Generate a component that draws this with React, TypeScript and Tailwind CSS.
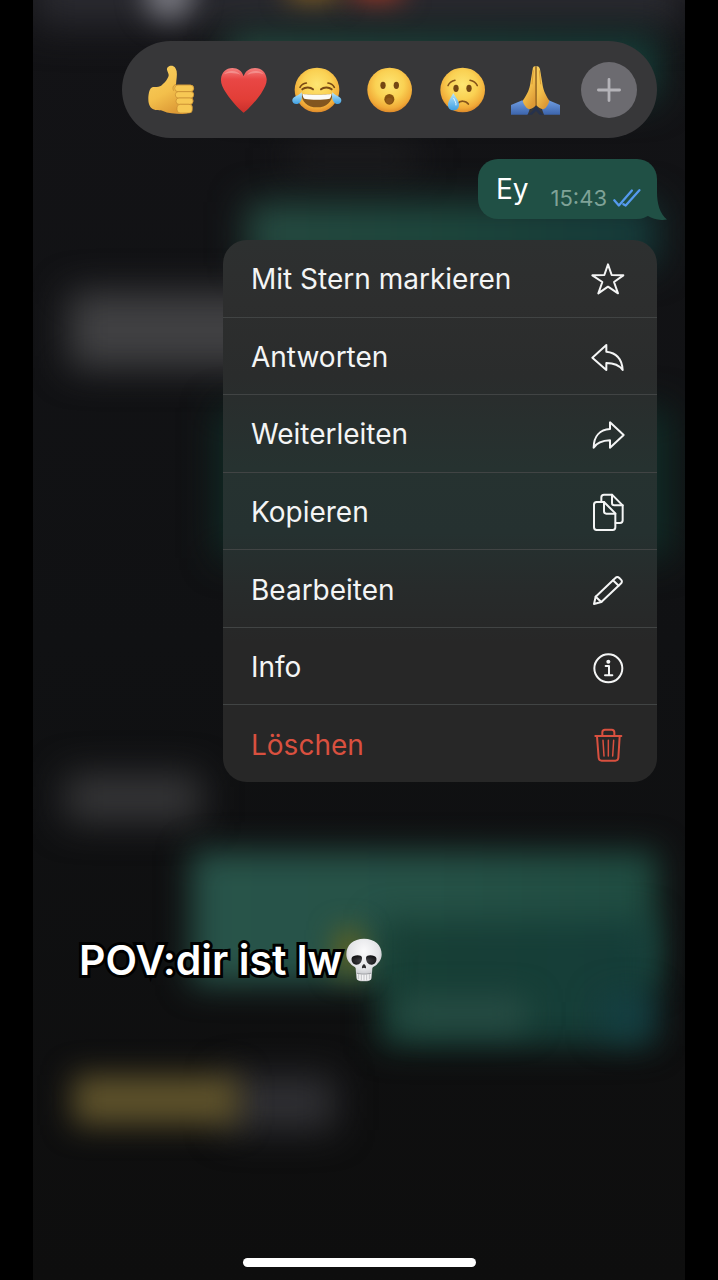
import type { ReactNode } from 'react';

/* ---------- Reaction drawings ---------- */

function Gradients() {
  return (
    <svg aria-hidden="true" className="absolute h-0 w-0">
      <defs>
        <radialGradient id="face" cx="0.5" cy="0.38" r="0.64">
          <stop offset="0" stopColor="#fde573" />
          <stop offset="0.5" stopColor="#fad153" />
          <stop offset="0.82" stopColor="#f1ab38" />
          <stop offset="1" stopColor="#d98227" />
        </radialGradient>
        <linearGradient id="hand" x1="0" y1="0" x2="0.5" y2="1">
          <stop offset="0" stopColor="#f9d160" />
          <stop offset="0.6" stopColor="#f3bf4b" />
          <stop offset="1" stopColor="#dd9a36" />
        </linearGradient>
        <linearGradient id="heart" x1="0" y1="0" x2="0" y2="1">
          <stop offset="0" stopColor="#f4807e" />
          <stop offset="0.25" stopColor="#e94745" />
          <stop offset="0.7" stopColor="#e23e37" />
          <stop offset="1" stopColor="#c92f2b" />
        </linearGradient>
        <linearGradient id="tear" x1="0" y1="0" x2="0" y2="1">
          <stop offset="0" stopColor="#b9e7fb" />
          <stop offset="1" stopColor="#3e9fe2" />
        </linearGradient>
        <linearGradient id="sleeve" x1="0" y1="0" x2="0" y2="1">
          <stop offset="0" stopColor="#6f9de2" />
          <stop offset="1" stopColor="#3c64ac" />
        </linearGradient>
        <radialGradient id="bone" cx="0.5" cy="0.3" r="0.7">
          <stop offset="0" stopColor="#fbfbfc" />
          <stop offset="0.6" stopColor="#e2e3e6" />
          <stop offset="1" stopColor="#a9abb0" />
        </radialGradient>
        <radialGradient id="socket" cx="0.5" cy="0.6" r="0.6">
          <stop offset="0" stopColor="#4b4b4f" />
          <stop offset="1" stopColor="#111113" />
        </radialGradient>
      </defs>
    </svg>
  );
}

function ThumbsUp() {
  return (
    <svg viewBox="69 79 168 168" className="h-full w-full">
      <path
        d="M154 90c9 0 14 7 16 17 2 13-1 24-2 40h42c8 0 11 5 11 10s-2 9-5 10c4 2 5 5 5 9s-2 8-6 10c4 2 5 5 5 9 0 5-3 8-7 10 3 2 4 5 4 9 0 12-9 21-30 21-24 0-44-2-58-9-10-4-20 0-31-6-8-5-13-14-13-30s4-35 14-36c8-1 15 1 21-2 9-5 23-20 26-32 1-6-4-12-5-18-1-7 5-12 13-12z"
        fill="url(#hand)"
      />
      <g fill="#f7c854" stroke="#c48a30" strokeWidth="2">
        <rect x="164" y="148" width="57" height="20" rx="10" />
        <rect x="166" y="168" width="55" height="19" rx="9" />
        <rect x="168" y="187" width="51" height="19" rx="9" />
        <rect x="171" y="206" width="46" height="26" rx="10" />
      </g>
      <path d="M168 146c-9 3-11 11-7 19" fill="none" stroke="#c48a30" strokeWidth="2.5" />
    </svg>
  );
}

function Heart() {
  return (
    <svg viewBox="288 79 168 168" className="h-full w-full">
      <path
        d="M371 231c-5-2-34-30-52-58-12-18-17-31-16-43 2-20 15-33 34-33 17 0 29 9 34 25 5-16 18-25 34-25 20 0 33 13 35 33 1 12-5 26-17 44-18 27-47 55-52 57z"
        fill="url(#heart)"
      />
      <path d="M312 116c6-11 38-17 50 2-14-7-36-8-50-2zM381 118c12-19 44-13 50-2-14-6-36-5-50 2z" fill="#fbc4c1" opacity="0.4" />
    </svg>
  );
}

function Joy() {
  return (
    <svg viewBox="507 79 168 168" className="h-full w-full">
      <circle cx="591" cy="163" r="67" fill="url(#face)" />
      <g fill="none" stroke="#7a4a16" strokeLinecap="round">
        <path d="M540 155c4-8 11-12 19-13M624 142c8 1 15 5 19 13" strokeWidth="5" />
        <path d="M547 161c8-7 24-7 32 0M603 161c8-7 24-7 32 0" strokeWidth="6" />
      </g>
      <path d="M545 174c10 4 82 4 92 0 1 24-18 41-46 41s-47-17-46-41z" fill="#82561f" />
      <path d="M547 174c12 4 76 4 88 0-1 7-3 12-6 15-22 4-54 4-76 0-3-3-5-8-6-15z" fill="#fbfbf6" />
      <path
        d="M545 170c2 13 1 24-6 31-5 5-14 6-19 1s-4-12 2-17c6-4 16-7 23-15zM637 170c-2 13-1 24 6 31 5 5 13 6 18 1s4-12-2-17c-6-4-15-7-22-15z"
        fill="url(#tear)"
      />
    </svg>
  );
}

function Surprised() {
  return (
    <svg viewBox="726 79 168 168" className="h-full w-full">
      <circle cx="809" cy="163" r="67" fill="url(#face)" />
      <ellipse cx="789" cy="149" rx="8" ry="11" fill="#744713" />
      <ellipse cx="829" cy="149" rx="8" ry="11" fill="#744713" />
      <ellipse cx="808" cy="191" rx="15" ry="16" fill="#85500f" />
      <ellipse cx="808" cy="195" rx="10" ry="9" fill="#90591a" />
    </svg>
  );
}

function Crying() {
  return (
    <svg viewBox="135 79 168 168" className="h-full w-full">
      <circle cx="218" cy="163" r="67" fill="url(#face)" />
      <ellipse cx="198" cy="158" rx="8" ry="11" fill="#744713" />
      <ellipse cx="237" cy="158" rx="8" ry="11" fill="#744713" />
      <g fill="none" stroke="#86531a" strokeLinecap="round">
        <path d="M174 150c4-9 11-14 21-16M240 134c10 2 18 7 22 16" strokeWidth="4.5" />
        <path d="M203 204c7-10 24-10 32 1" strokeWidth="5" />
      </g>
      <path d="M190 172c6 12 17 23 17 35s-8 17-17 17-16-6-16-17 10-23 16-35z" fill="url(#tear)" />
      <path d="M191 188c4 8 8 13 7 20" fill="none" stroke="#e4f7ff" strokeWidth="3" strokeLinecap="round" />
    </svg>
  );
}

function Praying() {
  return (
    <svg viewBox="354 79 168 168" className="h-full w-full">
      <path d="M363 208l34-14 22 27-6 16h-50zM510 208l-34-14-20 27 6 16h48z" fill="url(#sleeve)" />
      <path d="M437 92c-6-2-9 3-9 9l-7 42c-2 16-8 32-23 52 3 11 9 21 19 26 9-2 17-7 21-13z" fill="url(#hand)" />
      <path d="M439 92c6-2 10 3 11 9l7 42c2 16 7 32 21 52-3 11-8 21-18 26-9-2-17-7-21-13z" fill="url(#hand)" />
      <path d="M438 94v116" stroke="#9a641b" strokeWidth="3.5" />
      <path d="M430 104l-4 42M448 104l4 42" stroke="#d4952f" strokeWidth="2.5" fill="none" />
      <path d="M411 237c10-4 20-14 27-27 8 13 16 23 25 27h-14l-11-11-12 11z" fill="#26324c" />
    </svg>
  );
}

function Skull() {
  return (
    <svg viewBox="860 80 116 132" aria-hidden="true" className="h-11 w-10">
      <path
        d="M918 82c32 0 53 19 53 47 0 15-7 23-15 31-5 5-12 5-13 11l-2 28c-1 8-9 11-23 11s-22-3-23-11l-2-28c-1-6-8-6-13-11-8-8-15-16-15-31 0-28 21-47 53-47z"
        fill="url(#bone)"
      />
      <path d="M881 140c3-10 30-12 31-1 0 12-6 21-17 21-10 0-16-10-14-20zM955 140c-3-10-30-12-31-1 0 12 6 21 17 21 10 0 16-10 14-20z" fill="url(#socket)" />
      <path d="M918 158c4 3 7 8 6 12-3 2-4-1-6-1s-3 3-6 1c-1-4 2-9 6-12z" fill="#2a2a2c" />
      <path d="M897 185c12 3 30 3 42 0l-1 20c-8 4-32 4-40 0z" fill="#f4f4f5" />
      <path d="M896 184c12 3 32 3 44 0v3c-12 3-32 3-44 0z" fill="#9a9ba0" />
      <path d="M902 188v16M910 189v18M918 189v18M926 189v18M934 188v16" stroke="#a9abaf" strokeWidth="2" />
    </svg>
  );
}

/* ---------- Menu icons ---------- */

function Icon({ viewBox, children }: { viewBox: string; children: ReactNode }) {
  return (
    <svg
      viewBox={viewBox}
      aria-hidden="true"
      className="h-9 w-9 shrink-0 overflow-visible"
      fill="none"
      stroke="currentColor"
      strokeWidth="6"
      strokeLinejoin="round"
      strokeLinecap="round"
    >
      {children}
    </svg>
  );
}

const menuItems: { label: string; danger?: boolean; icon: ReactNode }[] = [
  {
    label: 'Mit Stern markieren',
    icon: (
      <Icon viewBox="91 61 108 108">
        <path d="M145 71L156 103L191 104L163 124L175 158L145 138L116 158L128 124L98 104L134 103Z" />
      </Icon>
    ),
  },
  {
    label: 'Antworten',
    icon: (
      <Icon viewBox="91 295 108 108">
        <path d="M98 351L140 313V333C168 336 187 352 189 388C178 372 164 367 140 367V388Z" />
      </Icon>
    ),
  },
  {
    label: 'Weiterleiten',
    icon: (
      <Icon viewBox="91 527 108 108">
        <path d="M192 584L151 546V566C122 568 102 586 102 622C112 606 126 601 151 600V622Z" />
      </Icon>
    ),
  },
  {
    label: 'Kopieren',
    icon: (
      <Icon viewBox="91 70 108 108">
        <path d="M111 94H133L167 128V170a8 8 0 0 1-8 8H111a8 8 0 0 1-8-8V102a8 8 0 0 1 8-8z" />
        <path d="M133 94V122q0 7 7 7H167" />
        <path d="M125 93V80a8 8 0 0 1 8-8H157L189 104V149a8 8 0 0 1-8 8H168" />
        <path d="M157 72V97q0 7 7 7H189" />
      </Icon>
    ),
  },
  {
    label: 'Bearbeiten',
    icon: (
      <Icon viewBox="91 302 108 108">
        <path d="M103 398L108 376L167 320Q173 314 179 320L184 325Q190 331 183 337L125 392Z" />
        <path d="M160 327L177 343M108 376L125 392" />
      </Icon>
    ),
  },
  {
    label: 'Info',
    icon: (
      <Icon viewBox="91 534 108 108">
        <circle cx="146" cy="592" r="42" />
        <circle cx="146" cy="572" r="6" fill="currentColor" stroke="none" />
        <path d="M138 585H148V612M136 613H158" />
      </Icon>
    ),
  },
  {
    label: 'Löschen',
    danger: true,
    icon: (
      <Icon viewBox="91 766 108 108">
        <path d="M107 793H185M128 791V782q0-8 8-8h20q8 0 8 8V791" />
        <path d="M112 794L117 859Q118 867 126 867H167Q175 867 176 859L180 794" />
        <path d="M146 806V853M130 806L133 853M162 806L159 853" strokeWidth="4.5" />
      </Icon>
    ),
  },
];

const reactions = [
  { name: 'Daumen hoch', art: <ThumbsUp /> },
  { name: 'Herz', art: <Heart /> },
  { name: 'Freudentränen', art: <Joy /> },
  { name: 'Erstaunt', art: <Surprised /> },
  { name: 'Weinend', art: <Crying /> },
  { name: 'Gefaltete Hände', art: <Praying /> },
];

/* ---------- Blurred chat behind the menu ---------- */

function BlurredChat() {
  return (
    <div aria-hidden="true" className="absolute inset-0 overflow-hidden bg-linear-to-b from-[#131316] via-[#101113] to-[#0e0e0e]">
      <div className="absolute -top-10 right-0 left-0 h-16 bg-[#2b2b31] blur-[20px]" />
      <div className="absolute -top-9 left-28 h-14 w-12 rounded-full bg-[#77777f] blur-[14px]" />
      <div className="absolute -top-8 left-64 h-8 w-12 bg-[#8a6420] blur-[14px]" />
      <div className="absolute -top-8 left-80 h-8 w-12 bg-[#a83a24] blur-[14px]" />
      <div className="absolute top-9 right-7 h-16 w-[430px] bg-linear-to-r from-[#265044] to-[#15403a] blur-[18px]" />
      <div className="absolute top-36 left-64 h-7 w-32 bg-[#1e1e20] blur-[18px]" />
      <div className="absolute top-[202px] right-7 h-16 w-[410px] bg-linear-to-r from-[#264c42] via-[#1d473d] to-[#153b3b] blur-[18px]" />
      <div className="absolute top-[292px] left-9 h-[76px] w-64 bg-[#414143] blur-[18px]" />
      <div className="absolute top-[408px] right-4 h-[150px] w-[450px] bg-[#102e28] blur-[18px]" />
      <div className="absolute top-[774px] left-8 h-12 w-[136px] bg-[#363638] blur-[18px]" />
      <div className="absolute top-[851px] right-7 h-[134px] w-[466px] bg-linear-to-r from-[#28544a] via-[#265247] to-[#1f4c41] blur-[16px]" />
      <div className="absolute top-[920px] right-8 h-[126px] w-[274px] bg-linear-to-r from-[#183f35] to-[#153d39] blur-[16px]" />
      <div className="absolute top-[1000px] left-[366px] h-7 w-32 bg-[#2a4f46] blur-[16px]" />
      <div className="absolute top-[1000px] right-9 h-8 w-11 bg-[#143f47] blur-[18px]" />
      <div className="absolute top-[930px] left-[304px] h-11 w-6 bg-[#6a641a] blur-[14px]" />
      <div className="absolute top-[1076px] left-[190px] h-[54px] w-28 bg-[#303034] blur-[18px]" />
      <div className="absolute top-[1075px] left-10 h-[50px] w-[166px] bg-[#5e522b] blur-[15px]" />
    </div>
  );
}

export default function App() {
  return (
    <div className="min-h-screen bg-black px-[33px] font-['Inter','Noto_Sans',sans-serif]">
      <Gradients />
      <main className="relative flex min-h-screen flex-col items-end overflow-hidden px-7 pt-[41px] pb-[13px]">
        <BlurredChat />

        <div className="relative flex h-[97px] items-center gap-[17px] rounded-full bg-[#373739] pr-5 pl-[21px]">
          {reactions.map((r) => (
            <button key={r.name} type="button" aria-label={r.name} className="h-14 w-14">
              {r.art}
            </button>
          ))}
          <button type="button" aria-label="Weitere Reaktionen" className="flex h-14 w-14 items-center justify-center rounded-full bg-[#6c6b70]">
            <svg viewBox="0 0 24 24" className="h-6 w-6" stroke="#b4b3b8" strokeWidth="2.8" strokeLinecap="round">
              <path d="M12 1.4V22.6M1.4 12H22.6" />
            </svg>
          </button>
        </div>

        <div className="relative mt-[21px] flex h-[60px] w-[179px] justify-between rounded-[20px] bg-[#205045] pr-4 pl-[18px] text-white">
          <p className="pt-3 text-[28px] leading-9">Ey</p>
          <div className="flex items-center gap-1.5 self-end pb-[7px]">
            <time className="text-[22px] leading-7 text-[#7fa297]">15:43</time>
            <svg viewBox="457 128 86 56" aria-label="Gelesen" className="h-5 w-7" fill="none" stroke="#559aee" strokeWidth="7" strokeLinecap="round" strokeLinejoin="round">
              <path d="M461 163L475 179L515 133M489 175L496 179L538 132" />
            </svg>
          </div>
          <svg viewBox="0 0 24 28" aria-hidden="true" className="absolute -right-2.5 -bottom-px h-7 w-6">
            <path d="M5 0H14C14 12 17 22 24 27.5C17 29 10 27 5 24Z" fill="#205045" />
          </svg>
        </div>

        <nav
          aria-label="Nachrichtenoptionen"
          className="relative mt-[21px] flex h-[542px] w-[434px] max-w-full flex-col overflow-hidden rounded-[24px] bg-[linear-gradient(180deg,#2d3030_0%,#2d2e2e_12%,#2a2c2c_25%,#263230_42%,#253130_54%,#272b2b_64%,#272727_74%,#272727_100%)] text-[#f4f5f5]"
        >
          {menuItems.map((item) => (
            <button
              key={item.label}
              type="button"
              className={
                item.danger
                  ? 'flex flex-1 items-center justify-between pt-0.5 pr-[31px] pl-7 text-left text-[28px] text-[#d9503f]'
                  : 'flex flex-1 items-center justify-between border-b border-[#414444] pt-0.5 pr-[31px] pl-7 text-left text-[28px]'
              }
            >
              {item.label}
              {item.icon}
            </button>
          ))}
        </nav>

        <p className="relative mt-[153px] flex items-center gap-0.5 self-start pl-[18px] text-[41px] leading-[50px] font-semibold text-white [-webkit-text-stroke:6px_black] [paint-order:stroke_fill]">
          POV:dir ist lw
          <Skull />
        </p>

        <div className="relative mt-auto h-[9px] w-[233px] self-center rounded-full bg-white" />
      </main>
    </div>
  );
}
